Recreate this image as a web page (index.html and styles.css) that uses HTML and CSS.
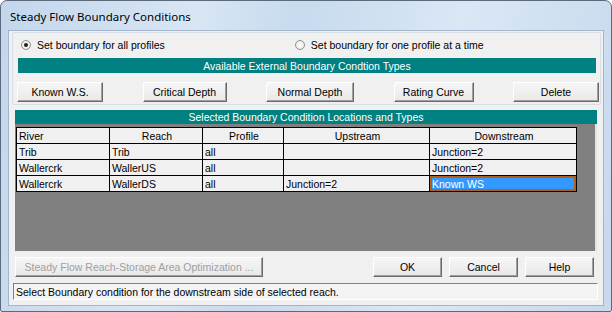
FILE: index.html
```html
<!DOCTYPE html>
<html lang="en">
<head>
  <meta charset="UTF-8">
  <title>Steady Flow Boundary Conditions</title>
  <link rel="stylesheet" href="styles.css">
</head>
<body>
  <div class="window">
    <div class="titlebar">Steady Flow Boundary Conditions</div>
    <div class="client">
      <!-- boundary type chooser -->
      <div class="groupbox">
        <div class="radio-row">
          <label class="radio"><span class="dot checked"></span>Set boundary for all profiles</label>
          <label class="radio second"><span class="dot"></span>Set boundary for one profile at a time</label>
        </div>
        <div class="bar bar-top">Available External Boundary Condtion Types</div>
        <div class="btn-row">
          <button class="btn">Known W.S.</button>
          <button class="btn">Critical Depth</button>
          <button class="btn">Normal Depth</button>
          <button class="btn">Rating Curve</button>
          <button class="btn">Delete</button>
        </div>
      </div>

      <!-- selected locations grid -->
      <div class="section">
        <div class="bar">Selected Boundary Condition Locations and Types</div>
        <div class="grid">
          <table class="bc-table">
            <tr>
              <th class="left c1">River</th>
              <th class="c2">Reach</th>
              <th class="c3">Profile</th>
              <th class="c4">Upstream</th>
              <th class="c5">Downstream</th>
            </tr>
            <tr>
              <td>Trib</td><td>Trib</td><td>all</td><td></td><td>Junction=2</td>
            </tr>
            <tr>
              <td>Wallercrk</td><td>WallerUS</td><td>all</td><td></td><td>Junction=2</td>
            </tr>
            <tr>
              <td>Wallercrk</td><td>WallerDS</td><td>all</td><td>Junction=2</td><td class="selected">Known WS</td>
            </tr>
          </table>
        </div>
      </div>

      <div class="bottom-row">
        <button class="btn btn-wide" disabled>Steady Flow Reach-Storage Area Optimization ...</button>
        <div class="spacer"></div>
        <button class="btn btn-small">OK</button>
        <button class="btn btn-small">Cancel</button>
        <button class="btn btn-small">Help</button>
      </div>

      <div class="status">Select Boundary condition for the downstream side of selected reach.</div>
    </div>
  </div>
</body>
</html>
```

FILE: styles.css
```css
body {
  margin: 0;
  padding: 0;
  font-family: "Liberation Sans", Arial, sans-serif;
  font-size: 10.5px;
  color: #000;
  background: #fff;
}

.window {
  width: 612px;
  height: 312px;
  box-sizing: border-box;
  border: 1px solid #5c6b7c;
  border-radius: 7px 7px 2px 2px;
  background: linear-gradient(100deg, #c3d6ec 0%, #d8e6f4 30%, #c7daee 45%, #dae7f5 70%, #c6d9ed 100%);
  display: flex;
  flex-direction: column;
}

.titlebar {
  height: 29px;
  line-height: 32px;
  padding-left: 9px;
  font-family: "Noto Sans", sans-serif;
  font-size: 11.5px;
  color: #000;
}

.client {
  margin: 0 7px;
  height: 274px;
  background: #f0f0f0;
  border: 1px solid #a3b5ca;
  display: flex;
  flex-direction: column;
}

.groupbox {
  margin: 1px 2px 0 3px;
  height: 71px;
  border: 1px solid #d5dfe5;
  border-radius: 2px;
  padding: 0 4px 0 5px;
}

.radio-row {
  display: flex;
  height: 24px;
  align-items: center;
}

.radio {
  display: flex;
  align-items: center;
  gap: 6px;
}

.radio.second {
  margin-left: 127px;
}

.dot {
  width: 10px;
  height: 10px;
  border-radius: 50%;
  border: 1px solid #8e8f8f;
  background: radial-gradient(circle, #fff 0%, #e4e4e4 100%);
  box-sizing: border-box;
  position: relative;
  margin-left: 3px;
}

.dot.checked::after {
  content: "";
  position: absolute;
  left: 2px;
  top: 2px;
  width: 4px;
  height: 4px;
  border-radius: 50%;
  background: #1e1e1e;
}

.bar {
  height: 14px;
  line-height: 14px;
  background: #008080;
  color: #fff;
  text-align: center;
}

.bar-top {
  height: 15px;
  line-height: 16px;
  margin-top: 1px;
}

.btn-row {
  display: flex;
  justify-content: space-between;
  margin: 9px -3px 0 -1px;
}

.btn {
  font-family: "Liberation Sans", Arial, sans-serif;
  font-size: 10.5px;
  color: #000;
  height: 20px;
  width: 86px;
  padding: 0;
  background: linear-gradient(#f6f6f6, #e8e8e8);
  border: 1px solid;
  border-color: #fff #6a6a6a #6a6a6a #fff;
  box-shadow: inset -1px -1px #a0a0a0;
}

.btn-row .btn:nth-child(2) {
  width: 84px;
}

.btn-row .btn:nth-child(3) {
  width: 88px;
}

.btn-row .btn:nth-child(4) {
  width: 80px;
}

.section {
  margin: 5px 6px 0 6px;
}

.grid {
  height: 127px;
  background: #808080;
  border-right: 2px solid #e4e4e4;
  box-sizing: border-box;
  padding: 3px 0 0 1px;
}

.bc-table {
  border-collapse: collapse;
  background: #f0f0f0;
}

.bc-table th,
.bc-table td {
  border: 1px solid #000;
  height: 15px;
  padding: 0 0 0 2px;
  font-weight: normal;
  text-align: left;
  white-space: nowrap;
  line-height: 14px;
}

.bc-table th {
  text-align: center;
}

.bc-table th.left {
  text-align: left;
}

.c1 { width: 90px; }
.c2 { width: 90px; }
.c3 { width: 78px; }
.c4 { width: 143px; }
.c5 { width: 144px; }

.bc-table td.selected {
  background: #3399ff;
  color: #fff;
  box-shadow: inset 0 0 0 2px #b0601c;
}

.bottom-row {
  display: flex;
  margin: 6px 9px 0 6px;
  gap: 7px;
}

.btn-wide {
  width: 248px;
  color: #a0a0a0;
}

.spacer {
  flex: 1;
}

.btn-small {
  width: 69px;
}

.status {
  margin: 6px 5px 0 4px;
  height: 17px;
  line-height: 16px;
  box-sizing: border-box;
  padding-left: 2px;
  border: 1px solid;
  border-color: #808080 #fff #fff #808080;
  background: #f4f4f4;
}
```
